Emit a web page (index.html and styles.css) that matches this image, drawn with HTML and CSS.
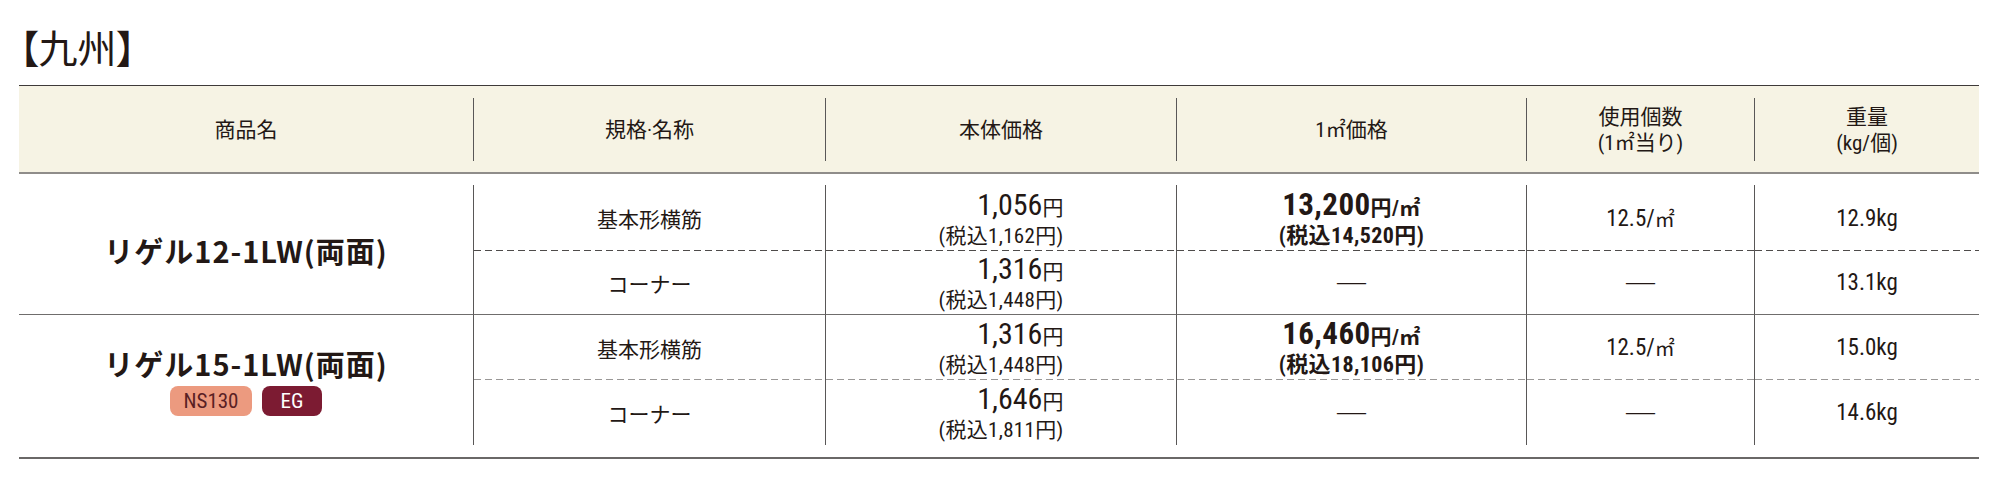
FILE: index.html
```html
<!DOCTYPE html>
<html lang="ja">
<head>
<meta charset="utf-8">
<title>九州 価格表</title>
<link rel="stylesheet" href="styles.css">
</head>
<body>
<h1 class="region-title">【九州】</h1>
<div class="price-table">
  <div class="thead">
    <div class="th"><div class="th-inner"><span class="line">商品名</span></div></div>
    <div class="th"><div class="th-inner divided"><span class="line">規格·名称</span></div></div>
    <div class="th"><div class="th-inner divided"><span class="line">本体価格</span></div></div>
    <div class="th"><div class="th-inner divided"><span class="line">1<span class="sqm">㎡</span>価格</span></div></div>
    <div class="th"><div class="th-inner divided"><span class="line">使用個数</span><span class="line">(1<span class="sqm">㎡</span>当り)</span></div></div>
    <div class="th"><div class="th-inner divided"><span class="line">重量</span><span class="line">(kg/個)</span></div></div>
  </div>
  <div class="tbody">
    <div class="name-cell group-end">
      <div class="product-name">リゲル12-1LW(両面)</div>
    </div>
    <div class="cell divided dashed-dark">基本形横筋</div>
    <div class="cell divided dashed-dark">
      <div class="price"><div class="price-main">1,056<span class="yen">円</span></div><div class="price-sub">(税込1,162円)</div></div>
    </div>
    <div class="cell divided dashed-dark">
      <div class="unit-price"><div class="unit-main">13,200<span class="unit-suffix">円/<span class="sqm">㎡</span></span></div><div class="unit-sub">(税込14,520円)</div></div>
    </div>
    <div class="cell divided dashed-dark value">12.5/<span class="sqm">㎡</span></div>
    <div class="cell divided dashed-dark value">12.9kg</div>

    <div class="cell divided group-end">コーナー</div>
    <div class="cell divided group-end">
      <div class="price"><div class="price-main">1,316<span class="yen">円</span></div><div class="price-sub">(税込1,448円)</div></div>
    </div>
    <div class="cell divided group-end"><span class="none">―</span></div>
    <div class="cell divided group-end"><span class="none">―</span></div>
    <div class="cell divided group-end value">13.1kg</div>

    <div class="name-cell">
      <div class="product-name">リゲル15-1LW(両面)</div>
      <div class="badges"><span class="badge badge-ns">NS130</span><span class="badge badge-eg">EG</span></div>
    </div>
    <div class="cell divided dashed-light">基本形横筋</div>
    <div class="cell divided dashed-light">
      <div class="price"><div class="price-main">1,316<span class="yen">円</span></div><div class="price-sub">(税込1,448円)</div></div>
    </div>
    <div class="cell divided dashed-light">
      <div class="unit-price"><div class="unit-main">16,460<span class="unit-suffix">円/<span class="sqm">㎡</span></span></div><div class="unit-sub">(税込18,106円)</div></div>
    </div>
    <div class="cell divided dashed-light value">12.5/<span class="sqm">㎡</span></div>
    <div class="cell divided dashed-light value">15.0kg</div>

    <div class="cell divided">コーナー</div>
    <div class="cell divided">
      <div class="price"><div class="price-main">1,646<span class="yen">円</span></div><div class="price-sub">(税込1,811円)</div></div>
    </div>
    <div class="cell divided"><span class="none">―</span></div>
    <div class="cell divided"><span class="none">―</span></div>
    <div class="cell divided value">14.6kg</div>
  </div>
</div>
</body>
</html>
```
FILE: styles.css
```css
html, body {
  margin: 0;
  padding: 0;
  background: #ffffff;
}
body {
  padding: 0 20px 0 19px;
  font-family: "Roboto Condensed", "Noto Sans CJK JP", sans-serif;
  color: #231815;
}
.region-title {
  margin: 0 0 20px 0;
  padding-top: 27px;
  font-family: "Noto Sans CJK JP", sans-serif;
  font-size: 39px;
  line-height: 38px;
  font-weight: 400;
  font-feature-settings: "palt";
}
.price-table {
  width: 1960px;
}
.thead,
.tbody {
  display: grid;
  grid-template-columns: 454px 352px 351px 350px 228px 225px;
}
.thead {
  background: #f6f3e4;
  border-top: 1px solid #3e3a39;
  border-bottom: 2px solid #8f8d8a;
  height: 86px;
  box-sizing: content-box;
}
.th {
  padding: 12px 0 11px;
}
.th-inner {
  height: 63px;
  display: flex;
  flex-direction: column;
  align-items: center;
  justify-content: center;
  font-family: "Roboto Condensed", "Noto Sans CJK JP", sans-serif;
  font-size: 21px;
  line-height: 26px;
}
.th-inner .line {
  display: block;
  white-space: nowrap;
}
.th-inner .sqm {
  font-family: "Roboto Condensed", "Noto Sans CJK JP", sans-serif;
  font-size: 20px;
}
.th-inner.divided {
  border-left: 1px solid #595757;
}
.tbody {
  padding: 11px 0 12px;
  grid-template-rows: 66px 64px 65px 65px;
  border-bottom: 2px solid #6a6867;
}
.name-cell {
  grid-row: span 2;
  display: flex;
  flex-direction: column;
  align-items: center;
  justify-content: center;
  box-sizing: border-box;
  padding-top: 1px;
}
.name-cell.group-end {
  border-bottom: 1px solid #6f6d6c;
}
.product-name {
  font-family: "Noto Sans CJK JP", sans-serif;
  font-size: 29px;
  line-height: 34px;
  font-weight: 700;
  letter-spacing: 1px;
}
.badges {
  display: flex;
  gap: 10px;
  margin-top: 6px;
}
.badge {
  display: inline-flex;
  align-items: center;
  justify-content: center;
  height: 30px;
  padding: 0 12px;
  border-radius: 8px;
  font-size: 21px;
  line-height: 30px;
  box-sizing: border-box;
}
.badge-ns {
  background: #ec9a7f;
  color: #5a1f24;
  min-width: 82px;
}
.badge-eg {
  background: #7c1b32;
  color: #ffffff;
  min-width: 60px;
}
.cell {
  display: flex;
  align-items: center;
  justify-content: center;
  box-sizing: border-box;
  font-size: 21px;
  font-family: "Noto Sans CJK JP", sans-serif;
}
.cell.divided {
  border-left: 1px solid #595757;
}
.cell.group-end {
  border-bottom: 1px solid #6f6d6c;
}
.dashed-dark {
  background-image: linear-gradient(to right, #4e4b4a 0 7px, transparent 7px 11px);
  background-size: 11px 1px;
  background-repeat: repeat-x;
  background-position: left bottom;
}
.dashed-light {
  background-image: linear-gradient(to right, #9a9897 0 7px, transparent 7px 11px);
  background-size: 11px 1px;
  background-repeat: repeat-x;
  background-position: left bottom;
}
.price {
  display: inline-block;
  text-align: right;
  font-family: "Roboto Condensed", "Noto Sans CJK JP", sans-serif;
}
.price-main {
  font-size: 30px;
  line-height: 31px;
}
.yen {
  font-size: 21px;
}
.price-sub {
  font-size: 21px;
  line-height: 24px;
  letter-spacing: 0.3px;
}
.unit-price {
  text-align: center;
  font-weight: 700;
  font-family: "Roboto Condensed", "Noto Sans CJK JP", sans-serif;
  letter-spacing: 0.4px;
}
.unit-main {
  font-size: 31px;
  line-height: 31px;
}
.unit-suffix {
  font-size: 21px;
}
.unit-sub {
  font-size: 22px;
  line-height: 24px;
}
.value {
  font-family: "Roboto Condensed", "Noto Sans CJK JP", sans-serif;
  font-size: 23px;
}
.value .sqm {
  font-size: 20px;
}
.none {
  font-family: "Noto Sans CJK JP", sans-serif;
  font-weight: 300;
  font-size: 34px;
  line-height: 34px;
}
```
